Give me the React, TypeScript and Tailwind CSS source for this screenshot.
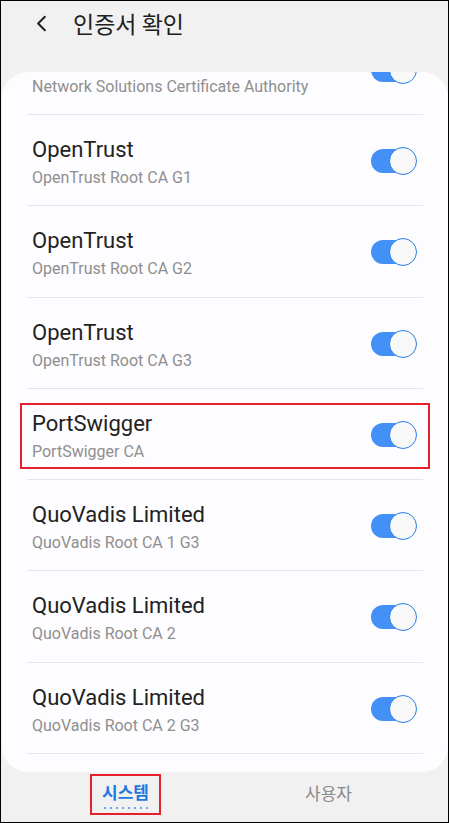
import { ChevronLeft } from 'lucide-react';

interface Cert {
  name: string;
  sub: string;
  highlight?: boolean;
}

const certs: Cert[] = [
  { name: 'Network Solutions L.L.C.', sub: 'Network Solutions Certificate Authority' },
  { name: 'OpenTrust', sub: 'OpenTrust Root CA G1' },
  { name: 'OpenTrust', sub: 'OpenTrust Root CA G2' },
  { name: 'OpenTrust', sub: 'OpenTrust Root CA G3' },
  { name: 'PortSwigger', sub: 'PortSwigger CA', highlight: true },
  { name: 'QuoVadis Limited', sub: 'QuoVadis Root CA 1 G3' },
  { name: 'QuoVadis Limited', sub: 'QuoVadis Root CA 2' },
  { name: 'QuoVadis Limited', sub: 'QuoVadis Root CA 2 G3' },
  { name: 'QuoVadis Limited', sub: 'QuoVadis Root CA 3' },
];

const Toggle = () => (
  <div className="relative w-[46px] h-[28px] flex items-center shrink-0 -mt-[2px]">
    {/* track */}
    <div className="w-[44px] h-[24px] rounded-full bg-[#4390f7]" />
    {/* knob */}
    <div className="absolute right-0 top-0 w-[28px] h-[28px] rounded-full bg-[#f8f8f8] border-[1.5px] border-[#2a7fea]" />
  </div>
);

const CertRow = ({ cert }: { cert: Cert }) => (
  <div className="h-[90.3px] px-[18px] pt-[14px]">
    <div
      className={`h-[66px] flex items-center pl-[10px] pr-[11px] border-2 ${
        cert.highlight ? 'border-[#e5212c]' : 'border-transparent'
      }`}
    >
      <div className="flex-1 self-start mt-[5px] flex flex-col">
        <span className="text-[22px] leading-[28px] text-[#222]">{cert.name}</span>
        <span className="text-[16px] leading-[20px] mt-[4px] text-[#8f8f8f]">{cert.sub}</span>
      </div>
      <Toggle />
    </div>
  </div>
);

const App = () => {
  return (
    <div
      className="w-[449px] h-[823px] bg-[#f1f1f1] border border-black overflow-hidden flex flex-col"
      style={{ fontFamily: 'Roboto, "Noto Sans CJK KR", sans-serif' }}
    >
      {/* Header */}
      <div className="h-[71px] shrink-0">
        <div className="h-[44px] flex items-center pl-[27px]">
          <ChevronLeft size={27} strokeWidth={1.8} className="text-[#222]" />
          <span
            className="ml-[18px] text-[23px] text-[#202020]"
            style={{ fontFamily: '"Noto Sans CJK KR", sans-serif' }}
          >
            인증서 확인
          </span>
        </div>
      </div>

      {/* Certificate list card */}
      <div className="h-[700px] shrink-0 ml-[1px] rounded-[26px] bg-[#fdfcfe] overflow-hidden">
        <div className="-mt-[48.3px]">
          {certs.map((c, i) => (
            <div key={i}>
              <CertRow cert={c} />
              <div className="mx-[25px] h-px bg-[#e6e6e8]" />
            </div>
          ))}
        </div>
      </div>

      {/* Tabs */}
      <div className="flex-1 flex pl-[23px] pr-[18px]">
        <div className="flex-1 flex justify-center pt-[2px]">
          <div className="w-[71px] h-[41px] border-2 border-[#e5212c] flex flex-col items-center justify-center">
            <span
              className="text-[17px] leading-[20px] font-bold text-[#1f78e0] mt-[2px]"
              style={{ fontFamily: '"Noto Sans CJK KR", sans-serif' }}
            >
              시스템
            </span>
            <div className="flex gap-[4px] mt-[5px]">
              {Array.from({ length: 8 }).map((_, i) => (
                <div key={i} className="w-[2px] h-[2px] rounded-full bg-[#3d8cf0]" />
              ))}
            </div>
          </div>
        </div>
        <div className="flex-1 flex justify-center pt-[11px]">
          <span
            className="text-[17px] leading-[20px] text-[#8a8a8a]"
            style={{ fontFamily: '"Noto Sans CJK KR", sans-serif' }}
          >
            사용자
          </span>
        </div>
      </div>
    </div>
  );
};

export default App;
